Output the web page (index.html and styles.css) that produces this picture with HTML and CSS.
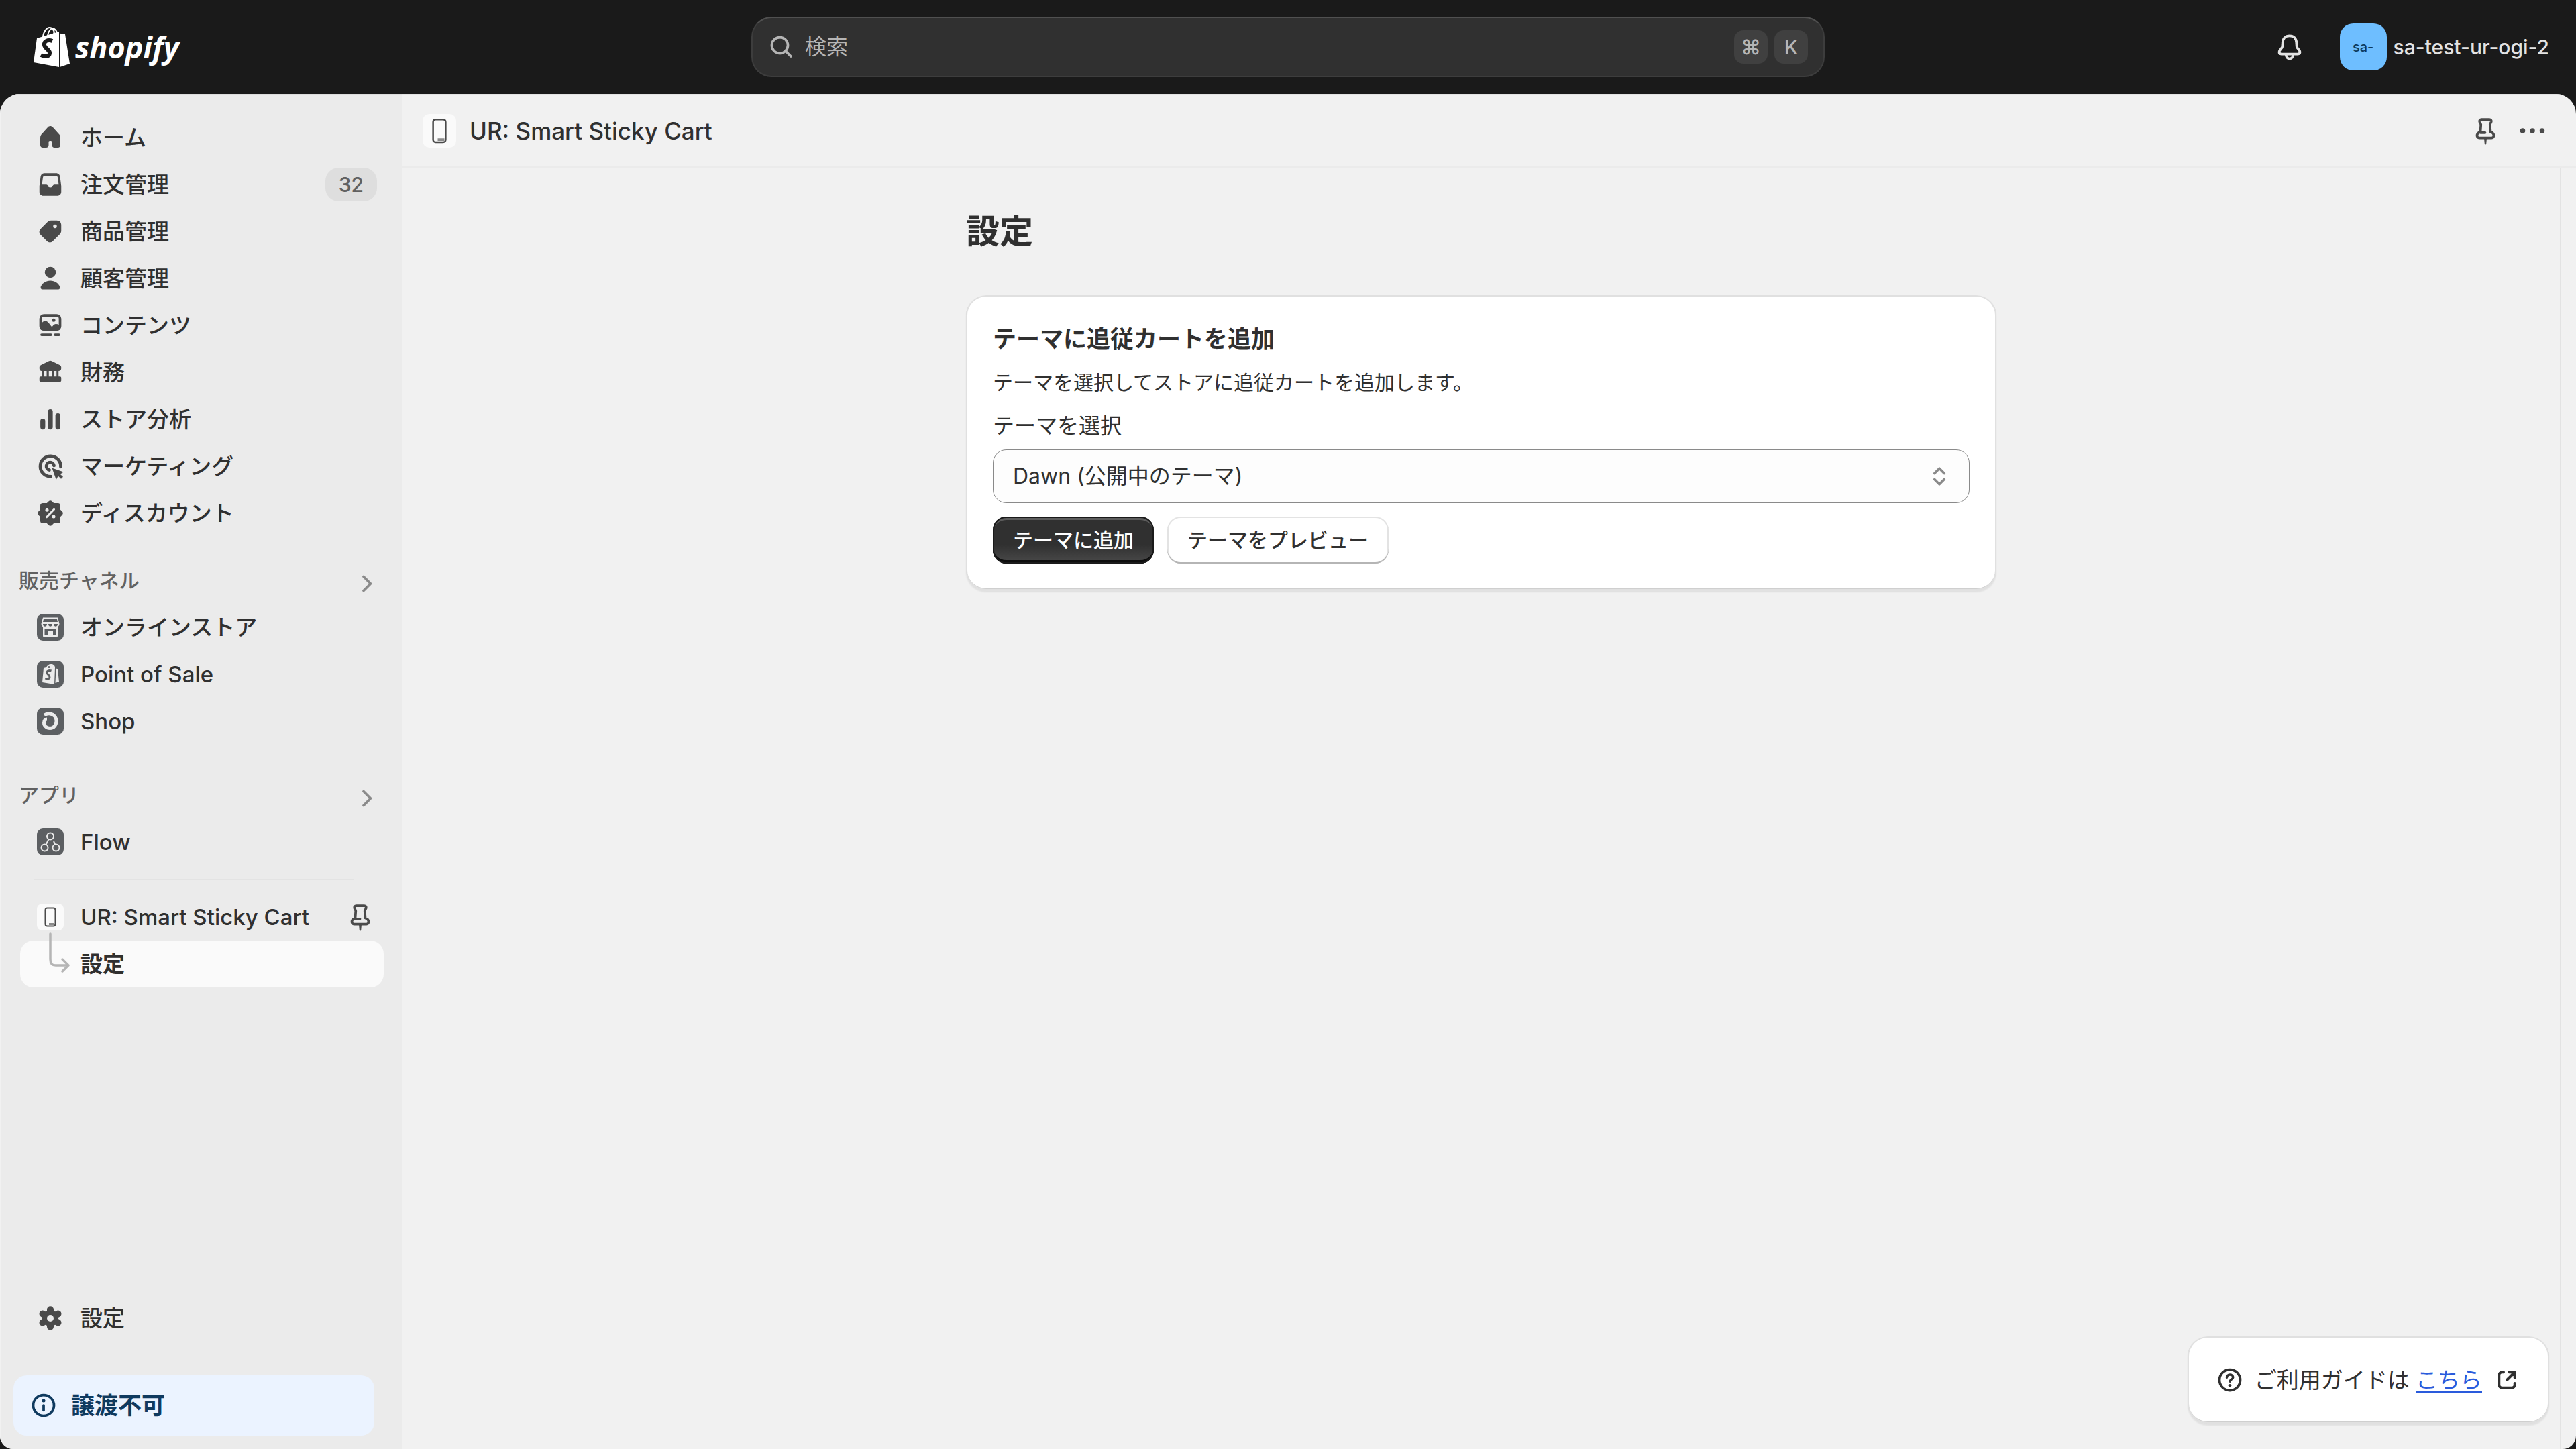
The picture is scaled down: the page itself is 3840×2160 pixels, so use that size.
FILE: index.html
```
<!DOCTYPE html>
<html lang="ja">
<head>
    <meta charset="UTF-8">
    <meta name="viewport" content="width=device-width, initial-scale=1.0">
    <title>UR: Smart Sticky Cart · 設定</title>
    <link rel="stylesheet" href="styles.css">
</head>
<body>
    <!-- Shared icons -->
    <svg class="sprite" aria-hidden="true">
        <symbol id="icon-pin" viewBox="0 0 20 20">
            <path d="M7.6 3.2h4.8c.7 0 1.2.6 1.1 1.3-.1.6-.7 1.2-.8 1.9l.3 4.2c1.2.4 2 1.1 2 2.3 0 .8-.6 1.3-1.3 1.3H6.3c-.7 0-1.3-.5-1.3-1.3 0-1.2.8-1.9 2-2.3l.3-4.2c-.1-.7-.7-1.3-.8-1.9-.1-.7.4-1.3 1.1-1.3z" fill="none" stroke="currentColor" stroke-width="1.5" stroke-linejoin="round"/>
            <path d="M7 11.1h2.800" stroke="currentColor" stroke-width="1.5" stroke-linecap="round"/>
            <path d="M9.200 14.5h1.600l-.3 3.2a.5.5 0 0 1-1 0z" fill="currentColor"/>
        </symbol>
        <symbol id="icon-chevron" viewBox="0 0 20 20">
            <path d="M8 5.8 12.2 10 8 14.2" fill="none" stroke="currentColor" stroke-width="1.5" stroke-linecap="round" stroke-linejoin="round"/>
        </symbol>
        <symbol id="icon-phone" viewBox="0 0 40 40">
            <rect width="40" height="40" rx="8" fill="#fafafa"/>
            <rect x="12.5" y="6.5" width="15" height="27" rx="3" fill="none" stroke="#4a4a4a" stroke-width="2"/>
            <path d="M18 30.5h8" stroke="#8a8a8a" stroke-width="3"/>
        </symbol>
    </svg>

    <header class="topbar">
        <a href="#" class="logo" aria-label="Shopify">
            <svg class="logo-bag" viewBox="0 0 54 60">
                <path d="M5 17 38 7v53L0 53z" fill="#fff"/>
                <path d="M39 8l2 3h6l7 44-15 5z" fill="#fff"/>
                <path d="M14 15C15 6 20 1 24 1s7 5 7 9M21 13c1-7 5-11 8-11 3 1 5 3 6 7M29 2c2 2 2 5 1 9" fill="none" stroke="#fff" stroke-width="2"/>
                <path d="M28 21c-7-3-13 1-12 6 1 6 9 7 8 13-1 5-8 5-13 2" fill="none" stroke="#1a1a1a" stroke-width="6"/>
            </svg>
            <span class="logo-text">shopify</span>
        </a>
        <div class="search">
            <svg class="icon" viewBox="0 0 20 20">
                <circle cx="9" cy="9" r="4.8" fill="none" stroke="currentColor" stroke-width="1.5"/>
                <path d="m12.6 12.6 3 3" stroke="currentColor" stroke-width="1.5" stroke-linecap="round"/>
            </svg>
            <input type="search" class="search-input" placeholder="検索" aria-label="検索">
            <kbd>⌘</kbd>
            <kbd>K</kbd>
        </div>
        <div class="account">
            <button type="button" class="icon-button" aria-label="通知">
                <svg class="icon" viewBox="0 0 20 20">
                    <path d="M10 3.3c-2.5 0-4 1.7-4.1 4l-.2 2.5c-.1 1-1.9 2-1.9 3.2 0 .8.6 1.2 1.3 1.2h9.800c.7 0 1.3-.4 1.3-1.2 0-1.2-1.8-2.2-1.9-3.2l-.2-2.5c-.1-2.3-1.6-4-4.1-4z" fill="none" stroke="currentColor" stroke-width="1.5" stroke-linejoin="round"/>
                    <path d="M7.9 14.5c0 1.5.8 2.5 2.1 2.5s2.1-1 2.1-2.5" fill="none" stroke="currentColor" stroke-width="1.5"/>
                </svg>
            </button>
            <button type="button" class="store">
                <span class="avatar">sa-</span>
                <span>sa-test-ur-ogi-2</span>
            </button>
        </div>
    </header>

    <div class="frame">
        <nav class="sidebar">
            <ul class="nav-list">
                <li><a href="#" class="nav-item">
                    <svg class="icon" viewBox="0 0 20 20"><path d="M8.6 3.8c.8-.8 2-.8 2.8 0l3.6 4c.7.7 1 1.5 1 2.4v4.3c0 .9-.6 1.5-1.5 1.5h-2c-.9 0-1.500-.6-1.500-1.500V12.600c0-.4-.4-.6-1-.6s-1 .2-1 .6v1.900c0 .9-.6 1.500-1.500 1.500h-2C4.600 16 4 15.400 4 14.500v-4.300c0-.9.3-1.7 1-2.4z" fill="currentColor"/></svg>
                    <span>ホーム</span>
                </a></li>
                <li><a href="#" class="nav-item">
                    <svg class="icon" viewBox="0 0 20 20"><path fill-rule="evenodd" d="M6.5 3.3h7c1.2 0 2.2.9 2.3 2.1l.7 5.5v3.5c0 1.3-1 2.3-2.3 2.3H5.8c-1.3 0-2.3-1-2.3-2.3v-3.5l.7-5.5C4.3 4.2 5.3 3.3 6.5 3.3zm.2 1.500c-.6 0-1 .4-1.100 1L5 10.100h2.600c.6 0 .8.4 1 .9.2.5.7.8 1.400.8s1.200-.3 1.400-.8c.2-.5.4-.9 1-.9H15l-.6-4.300c-.1-.6-.5-1-1.100-1z" fill="currentColor"/></svg>
                    <span>注文管理</span>
                    <span class="badge">32</span>
                </a></li>
                <li><a href="#" class="nav-item">
                    <svg class="icon" viewBox="0 0 20 20"><path fill-rule="evenodd" d="M10.3 3.5h3.600c1.500 0 2.600 1.100 2.600 2.600v3.600c0 .7-.3 1.400-.8 1.900l-4.200 4.200c-1 1-2.500 1-3.500 0l-3.800-3.800c-1-1-1-2.500 0-3.500l4.200-4.200c.5-.5 1.200-.8 1.900-.8zm2.500 4.600a1.100 1.100 0 1 0 0-2.200 1.100 1.100 0 0 0 0 2.200z" fill="currentColor"/></svg>
                    <span>商品管理</span>
                </a></li>
                <li><a href="#" class="nav-item">
                    <svg class="icon" viewBox="0 0 20 20"><circle cx="10" cy="6.4" r="3.3" fill="currentColor"/><path d="M10 11.4c2.7 0 4.7 1.4 5.7 3.6.3.8-.2 1.6-1 1.6H5.3c-.8 0-1.300-.8-1-1.600 1-2.200 3-3.600 5.700-3.600z" fill="currentColor"/></svg>
                    <span>顧客管理</span>
                </a></li>
                <li><a href="#" class="nav-item">
                    <svg class="icon" viewBox="0 0 20 20"><rect x="4.2" y="4" width="11.6" height="8.5" rx="2" fill="none" stroke="currentColor" stroke-width="1.5"/><path d="M4 10c1-1.5 1.7-2.6 3-2.6 1.8 0 2.5 2.2 4 3.6 1-1.4 1.5-1.8 2.5-1.8 1.2 0 2 .8 2.5 1.5v1c0 .7-.5 1.3-1.5 1.3h-9c-1 0-1.5-.5-1.5-1.3z" fill="currentColor"/><circle cx="12" cy="6.9" r="1" fill="currentColor"/><path d="M4.8 15.6h5.6M12.8 15.6h2.4" stroke="currentColor" stroke-width="1.5" stroke-linecap="round"/></svg>
                    <span>コンテンツ</span>
                </a></li>
                <li><a href="#" class="nav-item">
                    <svg class="icon" viewBox="0 0 20 20"><path d="M9.2 3.3c.5-.3 1.1-.3 1.6 0l4.7 2.3c.6.3 1 .8 1 1.5v.5c0 1-.7 1.6-1.6 1.6v3.3h.8c.5 0 .8.3.8.8v1.6c0 .5-.3.8-.8.8H4.3c-.5 0-.8-.3-.8-.8v-1.6c0-.5.3-.8.8-.8h.5V9.2c-.8 0-1.3-.7-1.3-1.6v-.5c0-.7.4-1.2 1-1.5zM6 9.2v3.3h1.800V9.200zm3.100 0v3.300h1.700V9.200zm3.100 0v3.300h1.500V9.200z" fill="currentColor"/></svg>
                    <span>財務</span>
                </a></li>
                <li><a href="#" class="nav-item">
                    <svg class="icon" viewBox="0 0 20 20"><path d="M5.5 11v3.6M10 5.4v9.2M14.5 7.8v6.8" stroke="currentColor" stroke-width="2.9" stroke-linecap="round"/></svg>
                    <span>ストア分析</span>
                </a></li>
                <li><a href="#" class="nav-item">
                    <svg class="icon" viewBox="0 0 20 20"><path d="M10.2 16.1A6.1 6.1 0 1 1 16.2 10.3" fill="none" stroke="currentColor" stroke-width="1.9" stroke-linecap="round"/><path d="M9.4 12.2A2.3 2.3 0 1 1 12.2 9.6" fill="none" stroke="currentColor" stroke-width="1.9" stroke-linecap="round"/><path d="m11 11 6.9 2.4-2 1.3 1.7 1.6-1.2 1.2-1.7-1.7-1.2 2.2z" fill="currentColor"/></svg>
                    <span>マーケティング</span>
                </a></li>
                <li><a href="#" class="nav-item">
                    <svg class="icon" viewBox="0 0 20 20"><rect x="4" y="4" width="12" height="12" rx="1.5" fill="currentColor"/><rect x="4.3" y="4.3" width="11.4" height="11.4" rx="1.5" transform="rotate(45 10 10)" fill="currentColor"/><path d="m7.8 12.3 4.4-4.6" stroke="#ebebeb" stroke-width="1.2" stroke-linecap="round"/><circle cx="8" cy="8.1" r="1" fill="#ebebeb"/><circle cx="12" cy="12" r="1" fill="#ebebeb"/></svg>
                    <span>ディスカウント</span>
                </a></li>
            </ul>

            <a href="#" class="nav-heading">
                <span>販売チャネル</span>
                <svg class="icon" viewBox="0 0 20 20"><use href="#icon-chevron"/></svg>
            </a>
            <ul class="nav-list">
                <li><a href="#" class="nav-item">
                    <svg class="icon app-icon" viewBox="0 0 40 40"><rect width="40" height="40" rx="9" fill="#5c5f62"/><path d="M9 5.500h22l2.500 9c0 2-1 4-2.500 5V33c0 1-1 1.500-2 1.500H11c-1 0-2-.5-2-1.500V19.500c-1.500-1-2.500-3-2.500-5z" fill="#ebebeb"/><path d="M10 8h20l1 4H9zM9 15h6c0 5-6 5-6 0zM17 15h6c0 5-6 5-6 0zM25 15h6c0 5-6 5-6 0zM11.500 22h17v9.500H24V26h-8v5.500h-4.500z" fill="#5c5f62"/></svg>
                    <span>オンラインストア</span>
                </a></li>
                <li><a href="#" class="nav-item">
                    <svg class="icon app-icon" viewBox="0 0 40 40"><rect width="40" height="40" rx="9" fill="#5c5f62"/><path d="M10 11l4-1c1-3 4-5 7-5s6 2 6 5l-1 25-18-3z" fill="#ebebeb"/><path d="M28.500 11 31 13l2 18-5.500 2z" fill="#ebebeb"/><path d="M21.500 15c-4-1.500-7 .5-6.500 3s4.500 3.500 4 6.500-4 3-6.500 1.500" fill="none" stroke="#5c5f62" stroke-width="3"/><circle cx="18" cy="9.500" r="1.500" fill="#5c5f62"/></svg>
                    <span>Point of Sale</span>
                </a></li>
                <li><a href="#" class="nav-item">
                    <svg class="icon app-icon" viewBox="0 0 40 40"><rect width="40" height="40" rx="9" fill="#5c5f62"/><path d="M11 11c3-2 6-2.500 9-2 5 1 9 5 9 11s-4 10.500-9.500 10.500-9-4-9-8c0-3.500 2-5.500 4.500-5.500" fill="none" stroke="#ebebeb" stroke-width="5"/></svg>
                    <span>Shop</span>
                </a></li>
            </ul>

            <a href="#" class="nav-heading apps">
                <span>アプリ</span>
                <svg class="icon" viewBox="0 0 20 20"><use href="#icon-chevron"/></svg>
            </a>
            <ul class="nav-list">
                <li><a href="#" class="nav-item">
                    <svg class="icon app-icon" viewBox="0 0 40 40"><rect width="40" height="40" rx="9" fill="#5c5f62"/><g fill="none" stroke="#ebebeb" stroke-width="2"><circle cx="20" cy="11.5" r="5"/><circle cx="11.5" cy="28.5" r="5"/><circle cx="28.5" cy="28.5" r="5"/><path d="m17.5 16-4 8M25 19l2 4.5"/></g></svg>
                    <span>Flow</span>
                </a></li>
            </ul>
            <hr class="divider">
            <ul class="nav-list">
                <li class="app-row">
                    <a href="#" class="nav-item">
                        <svg class="icon app-icon" viewBox="0 0 40 40"><use href="#icon-phone"/></svg>
                        <span>UR: Smart Sticky Cart</span>
                    </a>
                    <button type="button" class="pin-button" aria-label="固定"><svg class="icon" viewBox="0 0 20 20"><use href="#icon-pin"/></svg></button>
                </li>
                <li class="sub-row">
                    <svg class="branch" viewBox="0 0 32 60"><path d="M3 2v38c0 6 2 9 8 9h17M21 40l9 9-9 9" fill="none" stroke="#b5b5b5" stroke-width="3.5" stroke-linecap="round" stroke-linejoin="round"/></svg>
                    <a href="#" class="nav-item nav-sub" aria-current="page">設定</a>
                </li>
            </ul>

            <div class="sidebar-footer">
                <a href="#" class="nav-item">
                    <svg class="icon" viewBox="0 0 20 20"><circle cx="10" cy="10" r="4.8" fill="currentColor"/><path d="M10 4.9v10.2M5.4 7.4l9.2 5.2M5.4 12.6l9.2-5.2" stroke="currentColor" stroke-width="4" stroke-linecap="round"/><circle cx="10" cy="10" r="2" fill="#ebebeb"/></svg>
                    <span>設定</span>
                </a>
                <div class="notice">
                    <svg class="icon" viewBox="0 0 20 20"><circle cx="10" cy="10" r="6.2" fill="none" stroke="currentColor" stroke-width="1.5"/><path d="M10 10v2.9" stroke="currentColor" stroke-width="1.5" stroke-linecap="round"/><circle cx="10" cy="7.2" r="1" fill="currentColor"/></svg>
                    <span>譲渡不可</span>
                </div>
            </div>
        </nav>

        <main class="main">
            <div class="app-bar">
                <svg class="app-bar-icon" viewBox="0 0 40 40"><use href="#icon-phone"/></svg>
                <span class="app-name">UR: Smart Sticky Cart</span>
                <button type="button" class="icon-button" aria-label="固定"><svg class="icon" viewBox="0 0 20 20"><use href="#icon-pin"/></svg></button>
                <button type="button" class="icon-button" aria-label="その他">
                    <svg class="icon" viewBox="0 0 20 20"><g fill="currentColor"><circle cx="4.2" cy="10" r="1.5"/><circle cx="10" cy="10" r="1.5"/><circle cx="15.8" cy="10" r="1.5"/></g></svg>
                </button>
            </div>

            <div class="content">
                <div class="page">
                    <h1>設定</h1>
                    <form class="card">
                        <h2>テーマに追従カートを追加</h2>
                        <p>テーマを選択してストアに追従カートを追加します。</p>
                        <label for="theme">テーマを選択</label>
                        <div class="select-wrap">
                            <select id="theme">
                                <option>Dawn (公開中のテーマ)</option>
                            </select>
                            <svg class="icon select-arrows" viewBox="0 0 20 20"><path d="M7.1 8.2 10 5.3l2.9 2.9M7.1 11.8l2.9 2.9 2.9-2.9" fill="none" stroke="currentColor" stroke-width="1.5" stroke-linecap="round" stroke-linejoin="round"/></svg>
                        </div>
                        <div class="actions">
                            <button type="button" class="button primary">テーマに追加</button>
                            <button type="button" class="button">テーマをプレビュー</button>
                        </div>
                    </form>
                </div>

                <div class="help">
                    <svg class="icon" viewBox="0 0 20 20"><circle cx="10" cy="10" r="6.2" fill="none" stroke="currentColor" stroke-width="1.5"/><path d="M8.2 8.5c0-1 .8-1.7 1.8-1.7s1.9.6 1.9 1.6c0 1.3-1.8 1.2-1.9 2.5" fill="none" stroke="currentColor" stroke-width="1.4" stroke-linecap="round"/><circle cx="10" cy="13.3" r=".9" fill="currentColor"/></svg>
                    <span>ご利用ガイドは <a href="#">こちら</a></span>
                    <svg class="icon" viewBox="0 0 20 20"><path d="M8 5.3h-.8c-1.1 0-1.9.8-1.9 1.9v5.6c0 1.1.8 1.9 1.9 1.9h5.6c1.1 0 1.9-.8 1.9-1.9V12M10.2 9.8l4.5-4.5M11.3 5.3h3.4v3.4" fill="none" stroke="currentColor" stroke-width="1.6" stroke-linecap="round" stroke-linejoin="round"/></svg>
                </div>
            </div>
        </main>
    </div>
</body>
</html>
```
FILE: styles.css
```
:root {
    --topbar: #1a1a1a;
    --sidebar: #ebebeb;
    --surface: #f1f1f1;
    --text: #303030;
    --text-subdued: #616161;
    --icon: #4a4a4a;
    --link: #2a5bdc;
}

* {
    margin: 0;
    padding: 0;
    box-sizing: border-box;
}

body {
    font-family: 'Inter', 'Noto Sans CJK JP', sans-serif;
    font-size: 32px;
    line-height: 50px;
    color: var(--text);
    background: var(--topbar);
    display: flex;
    flex-direction: column;
    min-height: 100vh;
}

a {
    color: inherit;
    text-decoration: none;
}

ul {
    list-style: none;
}

button,
input,
select {
    font: inherit;
    color: inherit;
}

button {
    border: none;
    background: none;
    cursor: pointer;
}

.sprite {
    position: absolute;
    width: 0;
    height: 0;
}

.icon {
    display: block;
    flex: none;
    width: 50px;
    height: 50px;
}

.icon-button {
    width: 50px;
    height: 50px;
}

/* Top bar */
.topbar {
    display: grid;
    grid-template-columns: 1fr minmax(0, 1600px) 1fr;
    align-items: center;
    height: 140px;
    padding: 0 40px;
    color: #e3e3e3;
}

.logo {
    display: flex;
    align-items: center;
    gap: 8px;
    padding-left: 10px;
}

.logo-bag {
    width: 54px;
    height: 60px;
}

.logo-text {
    font-family: 'Open Sans', sans-serif;
    font-size: 45px;
    font-weight: 700;
    font-style: italic;
    color: #fff;
}

.search {
    display: flex;
    align-items: center;
    gap: 10px;
    height: 90px;
    padding: 0 23px 0 18px;
    color: #b5b5b5;
    background: #303030;
    border: 2px solid #3d3d3d;
    border-top-color: #505050;
    border-radius: 30px;
}

.search-input {
    flex: 1;
    min-width: 0;
    border: none;
    outline: none;
    background: none;
}

.search-input::placeholder {
    color: #b5b5b5;
}

kbd {
    width: 50px;
    height: 50px;
    font-family: inherit;
    font-size: 30px;
    font-weight: 500;
    text-align: center;
    background: #404040;
    border-radius: 14px;
}

.account {
    display: flex;
    align-items: center;
    justify-content: flex-end;
    gap: 50px;
}

.store {
    display: flex;
    align-items: center;
    gap: 10px;
    font-size: 30px;
    font-weight: 500;
}

.avatar {
    width: 70px;
    height: 70px;
    font-size: 20px;
    line-height: 70px;
    color: #0d3a5c;
    background: #6ebeff;
    border-radius: 20px;
}

/* Frame */
.frame {
    flex: 1;
    display: flex;
    overflow: hidden;
    background: var(--surface);
    border-radius: 30px 30px 20px 20px;
}

.sidebar {
    display: flex;
    flex-direction: column;
    flex: none;
    width: 600px;
    padding: 28px 28px 20px;
    background: var(--sidebar);
    border-top: 2px solid #dcdcdc;
    border-left: 2px solid #f1f1f1;
}

.nav-item {
    display: flex;
    align-items: center;
    gap: 20px;
    height: 70px;
    padding: 0 10px 0 20px;
    font-size: 33px;
    font-weight: 500;
}

.nav-item .icon {
    color: var(--icon);
}

.nav-item .app-icon {
    width: 40px;
    height: 40px;
    margin: 0 5px;
}

.badge {
    margin-left: auto;
    padding: 0 20px;
    font-size: 30px;
    color: var(--text-subdued);
    background: #dedede;
    border-radius: 20px;
}

.nav-heading {
    display: flex;
    align-items: center;
    justify-content: space-between;
    height: 70px;
    margin: 30px 0 0 -2px;
    font-size: 30px;
    font-weight: 500;
    color: var(--text-subdued);
}

.nav-heading.apps {
    margin-top: 40px;
}

.nav-heading .icon {
    margin-top: 10px;
    color: #8a8a8a;
}

.divider {
    margin: 20px 44px 20px 20px;
    border: none;
    border-top: 2px solid #e3e3e3;
}

.app-row {
    display: flex;
    align-items: center;
    justify-content: space-between;
}

.pin-button {
    margin-right: 10px;
    color: var(--icon);
}

.sub-row {
    position: relative;
}

.nav-sub {
    padding-left: 90px;
    font-weight: 600;
    background: #fafafa;
    border-radius: 20px;
}

.branch {
    position: absolute;
    left: 42px;
    top: -12px;
    width: 32px;
    height: 60px;
}

.sidebar-footer {
    display: flex;
    flex-direction: column;
    gap: 50px;
    margin-top: auto;
}

.notice {
    display: flex;
    align-items: center;
    gap: 16px;
    height: 90px;
    margin: 0 14px 0 -10px;
    padding: 0 20px;
    font-size: 35px;
    font-weight: 600;
    color: #0f3a5f;
    background: #ebf3ff;
    border-radius: 20px;
}

/* Main column */
.main {
    flex: 1;
    display: flex;
    flex-direction: column;
    min-width: 0;
}

.app-bar {
    display: flex;
    align-items: center;
    gap: 20px;
    height: 110px;
    padding: 0 40px 0 30px;
    border-top: 2px solid #e3e3e3;
    border-bottom: 2px solid #ebebeb;
}

.app-bar-icon {
    width: 50px;
    height: 50px;
}

.app-name {
    flex: 1;
    font-size: 35px;
    font-weight: 500;
}

.app-bar .icon {
    color: var(--icon);
}

.content {
    flex: 1;
    display: flex;
    flex-direction: column;
    margin-right: 22px;
    border-right: 2px solid #e3e3e3;
}

.page {
    width: 100%;
    max-width: 1536px;
    margin: 0 auto;
    padding-top: 60px;
}

h1 {
    margin-bottom: 60px;
    font-size: 50px;
    line-height: 70px;
    font-weight: 700;
}

.card,
.help {
    background: #fff;
    border-radius: 30px;
    box-shadow: inset 0 0 0 2px #e0e0e0, inset 0 -2px 0 1px #cfcfcf, 0 3px 2px rgba(26, 26, 26, .07);
}

.card {
    padding: 40px;
}

h2 {
    font-size: 35px;
    font-weight: 700;
}

.card p {
    margin: 20px 0;
    font-size: 30px;
    line-height: 40px;
}

.card label {
    display: block;
    margin-bottom: 10px;
}

.select-wrap {
    position: relative;
}

select {
    appearance: none;
    width: 100%;
    height: 80px;
    padding: 0 80px 0 29px;
    background: #fdfdfd;
    border: 1px solid #8a8a8a;
    border-radius: 20px;
}

.select-arrows {
    position: absolute;
    right: 20px;
    top: 15px;
    color: #8a8a8a;
    pointer-events: none;
}

.actions {
    display: flex;
    gap: 20px;
    margin-top: 20px;
}

.button {
    height: 70px;
    padding: 0 30px;
    font-size: 30px;
    font-weight: 500;
    background: #fff;
    border-radius: 20px;
    box-shadow: inset 0 -2px 0 #b5b5b5, inset 0 0 0 2px #e3e3e3;
}

.button.primary {
    color: #fff;
    background: linear-gradient(#303030 60%, #4a4a4a);
    box-shadow: inset 0 0 0 2px #1a1a1a, inset 0 -5px 0 #0d0d0d, inset 0 5px 0 #5c5c5c;
}

.help {
    display: flex;
    align-items: center;
    gap: 12px;
    align-self: flex-end;
    height: 130px;
    margin: auto 16px 38px 0;
    padding: 0 38px;
    font-size: 33px;
}

.help a {
    color: var(--link);
    text-decoration: underline;
    text-decoration-thickness: 3px;
    text-underline-offset: 5px;
}
```
